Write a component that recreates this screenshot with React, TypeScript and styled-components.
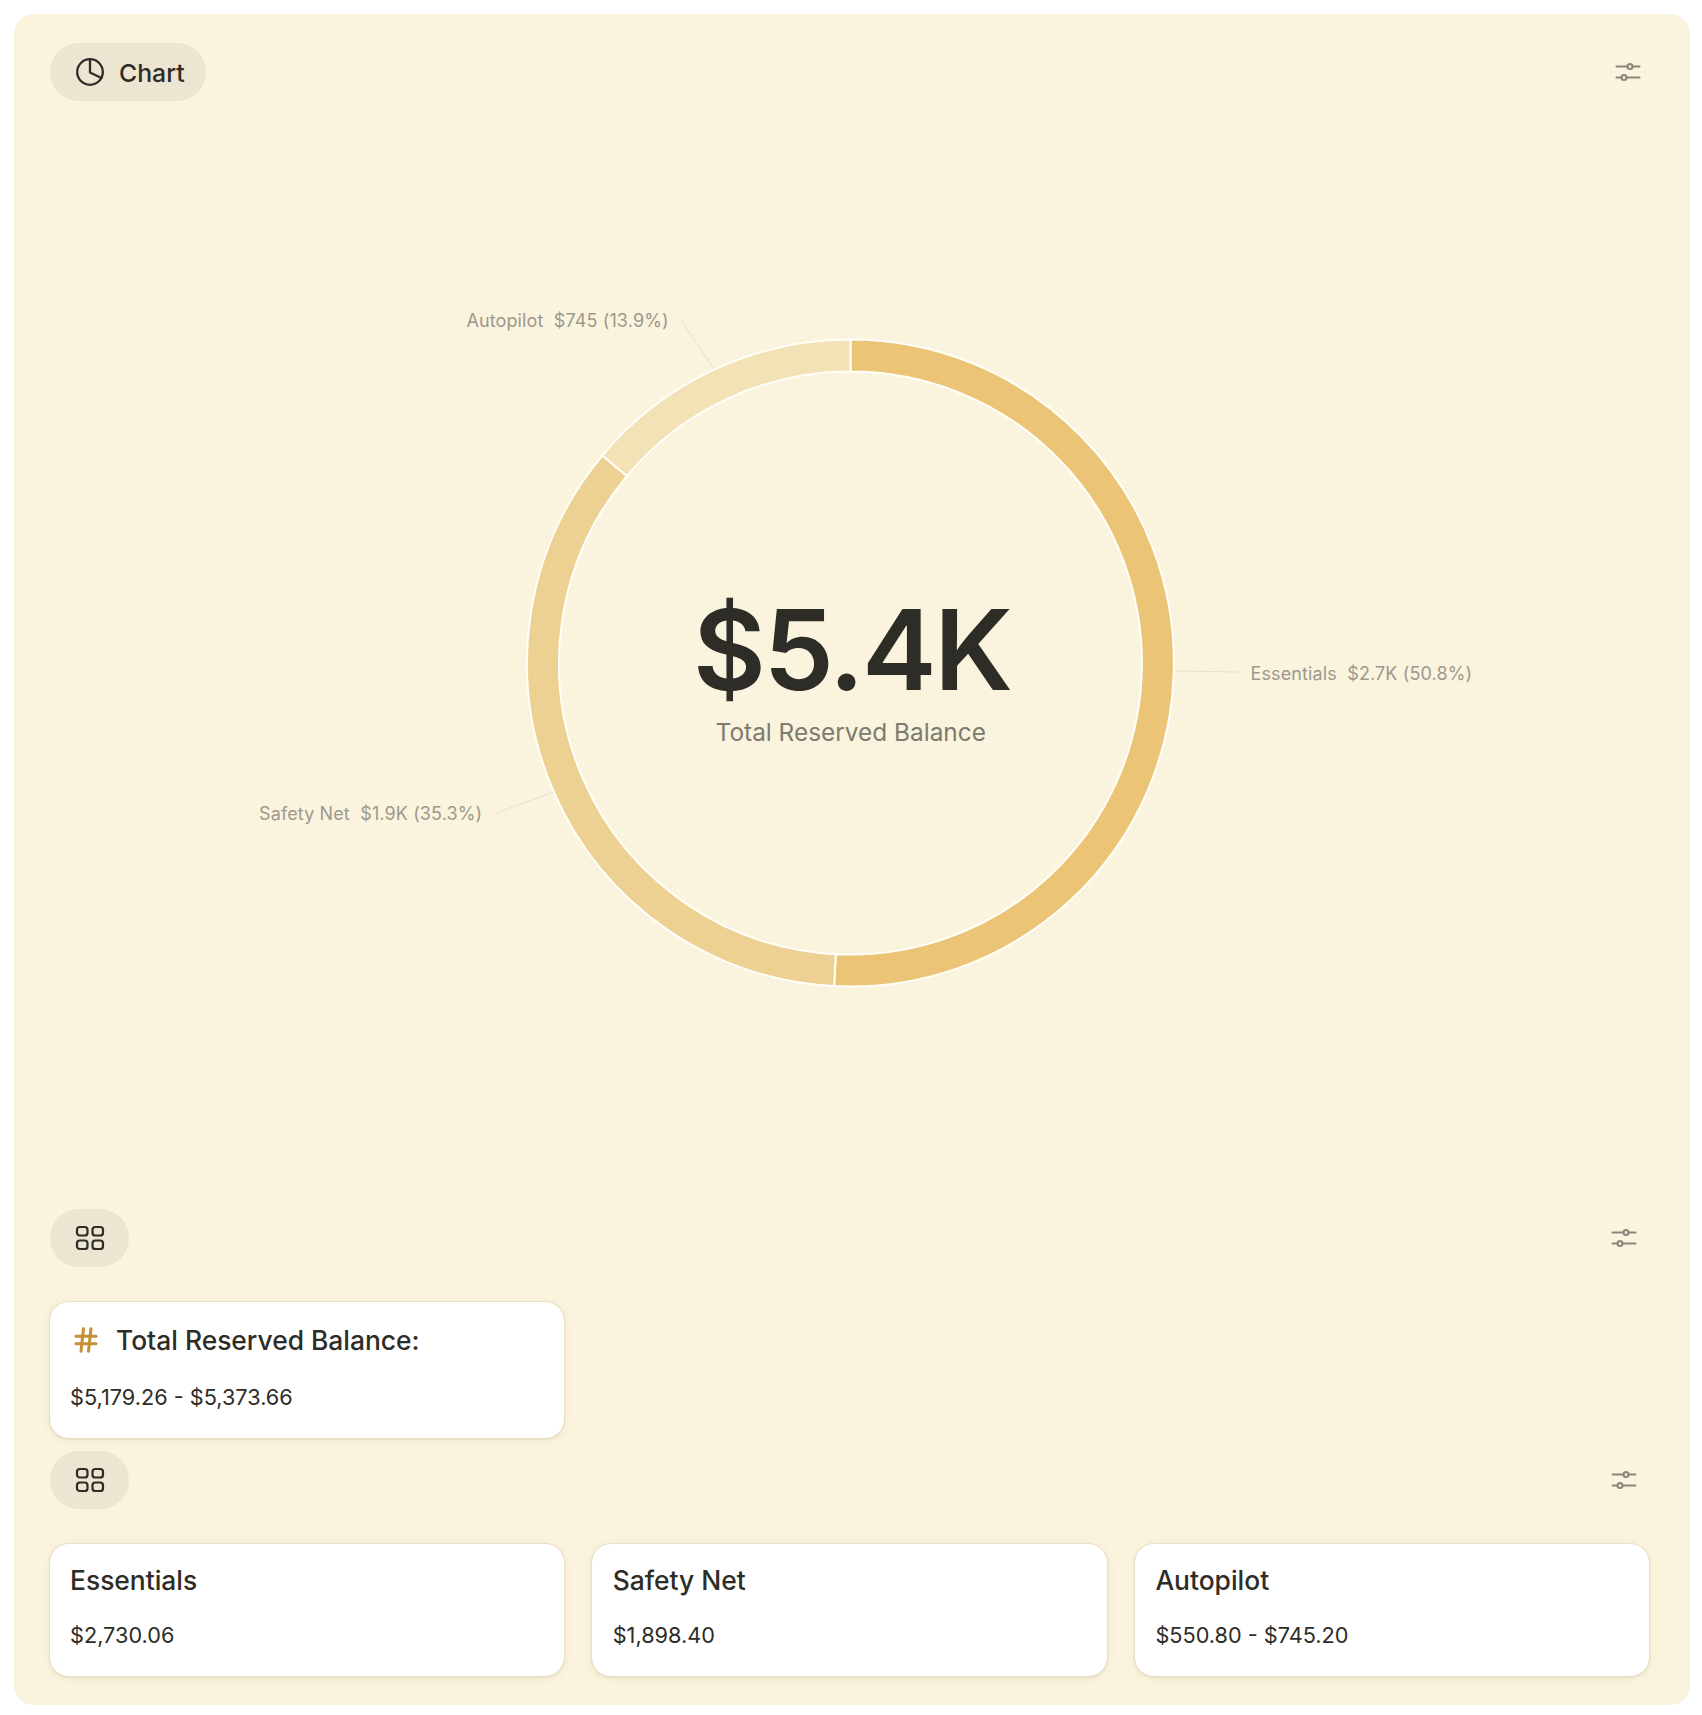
import styled, { createGlobalStyle } from 'styled-components'
import { Hash } from 'lucide-react'

const GlobalStyle = createGlobalStyle`
  html, body {
    margin: 0;
    padding: 0;
    background: #fff;
    font-family: Inter, "Liberation Sans", sans-serif;
    color: #2e2c27;
  }
  * { box-sizing: border-box; }
`

const Panel = styled.main`
  width: 1676px;
  height: 1691px;
  margin: 14px 0 10px 14px;
  padding: 29px 40px 30px 34.5px;
  background: #faf3de;
  border-radius: 20px;
`

const TopRow = styled.div`
  display: flex;
  justify-content: space-between;
  align-items: center;
  height: 58px;
  padding-left: 1.5px;
  padding-right: 9px;
`

const Row = styled(TopRow)`
  padding-right: 13px;
`

const Pill = styled.div`
  display: flex;
  align-items: center;
  justify-content: center;
  gap: 14px;
  height: 58px;
  min-width: 79px;
  padding: 1px 21px 0 25px;
  background: #ebe5d2;
  border-radius: 29px;
  font-size: 24.8px;
  font-weight: 500;
`

const IconPill = styled(Pill)`
  padding: 0;
`

const ChartArea = styled.section`
  position: relative;
  display: flex;
  justify-content: center;
  height: 1108px;
  padding-top: 112px;
`

const ChartSvg = styled.svg`
  display: block;
  width: 1500px;
  height: 900px;
  flex: none;
`

const SliceLabel = styled.text`
  font-size: 18px;
  fill: #9d998d;
  letter-spacing: 0.12px;
  white-space: pre;
`

const Center = styled.div`
  position: absolute;
  top: 480px;
  left: 0;
  right: 0;
  display: flex;
  flex-direction: column;
  align-items: center;
`

const BigValue = styled.div`
  margin-left: 5px;
  font-size: 112px;
  font-weight: 600;
  line-height: 136px;
  letter-spacing: -2.4px;
`

const CenterCaption = styled.div`
  margin: -1px 0 0 3px;
  font-size: 24.4px;
  line-height: 32px;
  color: #7d7a70;
`

const CardGrid = styled.div<{ $top: number; $bottom: number }>`
  display: grid;
  grid-template-columns: repeat(3, 516.5px);
  gap: 26.2px;
  margin-top: ${(p) => p.$top}px;
  margin-bottom: ${(p) => p.$bottom}px;
`

const Card = styled.article`
  padding: 19.5px 20px 26px 20.5px;
  background: #fff;
  border: 1px solid #e9dfc4;
  border-radius: 20px;
  box-shadow: 0 1px 2px rgba(170, 150, 100, 0.16), 0 2px 10px rgba(190, 170, 120, 0.1);
`

const CardTitle = styled.div<{ $tall?: boolean }>`
  display: flex;
  align-items: center;
  gap: 15px;
  min-height: ${(p) => (p.$tall ? 36 : 32)}px;
  font-size: 26.4px;
  font-weight: 500;
  line-height: 32px;
`

const HashIcon = styled(Hash)`
  width: 30px;
  height: 30px;
  color: #c48f35;
  flex: none;
  margin-left: 1px;
`

const CardAmount = styled.div`
  margin-top: 24.5px;
  font-size: 21.7px;
  line-height: 30px;
`

const Icon = styled.svg`
  display: block;
  flex: none;
  fill: none;
  stroke: currentColor;
  stroke-linecap: round;
  stroke-linejoin: round;
`

const ChartIcon = styled(Icon)`
  margin-top: -1px;
`

const SlidersIcon = styled(Icon)`
  color: #8a867a;
`

const CX = 751.5
const CY = 450
const R1 = 323.5
const R0 = 291.5

const polar = (r: number, deg: number) => {
  const a = ((deg - 90) * Math.PI) / 180
  return `${(CX + r * Math.cos(a)).toFixed(2)} ${(CY + r * Math.sin(a)).toFixed(2)}`
}

const arc = (from: number, to: number) => {
  const large = to - from > 180 ? 1 : 0
  return `M${polar(R1, from)} A${R1} ${R1} 0 ${large} 1 ${polar(R1, to)} L${polar(R0, to)} A${R0} ${R0} 0 ${large} 0 ${polar(R0, from)} Z`
}

const slices = [
  { from: 0, to: 182.9, color: '#ebc475' },
  { from: 182.9, to: 309.9, color: '#edd193' },
  { from: 309.9, to: 360, color: '#f2e2b6' },
]

const labels = [
  { x: 1151.5, y: 466.5, text: 'Essentials  $2.7K (50.8%)', line: 'M1076 458 L1139 459' },
  { x: 160, y: 606.5, text: 'Safety Net  $1.9K (35.3%)', line: 'M397 600 L455 579' },
  { x: 367.4, y: 113.5, text: 'Autopilot  $745 (13.9%)', line: 'M583 109 L615 156' },
]

const Sliders = () => (
  <SlidersIcon width="26" height="26" viewBox="0 0 26 26" strokeWidth="2">
    <path d="M1.5 7.5H12.5M17.5 7.5H24.5M1.5 18.5H6.5M11.5 18.5H24.5" />
    <circle cx="15" cy="7.5" r="2.5" />
    <circle cx="9" cy="18.5" r="2.5" />
  </SlidersIcon>
)

const Grid = () => (
  <Icon width="30" height="30" viewBox="0 0 30 30" strokeWidth="2.2">
    <rect x="2" y="4" width="10.5" height="8.5" rx="2.8" />
    <rect x="17.5" y="4" width="10.5" height="8.5" rx="2.8" />
    <rect x="2" y="17.5" width="10.5" height="8.5" rx="2.8" />
    <rect x="17.5" y="17.5" width="10.5" height="8.5" rx="2.8" />
  </Icon>
)

const App = () => (
  <>
    <GlobalStyle />
    <Panel>
      <TopRow>
        <Pill>
          <ChartIcon width="30" height="30" viewBox="0 0 30 30" strokeWidth="2.3">
            <circle cx="15" cy="15" r="12.8" />
            <path d="M15 2.4V15.5L26.5 21" />
          </ChartIcon>
          Chart
        </Pill>
        <Sliders />
      </TopRow>

      <ChartArea>
        <ChartSvg viewBox="0 0 1500 900">
          {slices.map((s) => (
            <path key={s.from} d={arc(s.from, s.to)} fill={s.color} stroke="#fffef9" strokeWidth="2" />
          ))}
          {labels.map((l) => (
            <g key={l.text}>
              <path d={l.line} stroke="#e6e0cd" strokeWidth="1" fill="none" />
              <SliceLabel x={l.x} y={l.y}>
                {l.text}
              </SliceLabel>
            </g>
          ))}
        </ChartSvg>
        <Center>
          <BigValue>$5.4K</BigValue>
          <CenterCaption>Total Reserved Balance</CenterCaption>
        </Center>
      </ChartArea>

      <Row>
        <IconPill>
          <Grid />
        </IconPill>
        <Sliders />
      </Row>
      <CardGrid $top={34} $bottom={12}>
        <Card>
          <CardTitle $tall>
            <HashIcon strokeWidth={2.4} />
            Total Reserved Balance:
          </CardTitle>
          <CardAmount>$5,179.26 - $5,373.66</CardAmount>
        </Card>
      </CardGrid>

      <Row>
        <IconPill>
          <Grid />
        </IconPill>
        <Sliders />
      </Row>
      <CardGrid $top={34} $bottom={0}>
        <Card>
          <CardTitle>Essentials</CardTitle>
          <CardAmount>$2,730.06</CardAmount>
        </Card>
        <Card>
          <CardTitle>Safety Net</CardTitle>
          <CardAmount>$1,898.40</CardAmount>
        </Card>
        <Card>
          <CardTitle>Autopilot</CardTitle>
          <CardAmount>$550.80 - $745.20</CardAmount>
        </Card>
      </CardGrid>
    </Panel>
  </>
)

export default App
